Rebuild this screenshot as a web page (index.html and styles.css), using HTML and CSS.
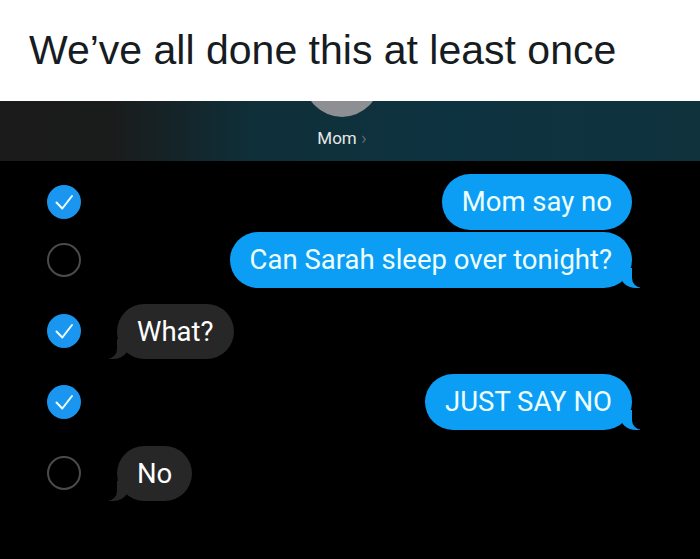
FILE: index.html
```html
<!DOCTYPE html>
<html>

<head>
    <meta charset="UTF-8">
    <title>We've all done this at least once</title>
    <link rel="stylesheet" href="styles.css">
</head>

<body>
    <div class="caption">We’ve all done this at least once</div>

    <div class="shot">
        <div class="contact">
            <div class="avatar"></div>
            <div class="name">Mom <span class="chev">›</span></div>
        </div>

        <div class="chat">
            <div class="row">
                <span class="check on">
                    <svg viewBox="0 0 34 34" width="34" height="34"><path d="M9.5 17.5 L15.3 23.5 L25 11" /></svg>
                </span>
                <div class="bubble sent">Mom say no</div>
            </div>
            <div class="row cont">
                <span class="check"></span>
                <div class="bubble sent tail">Can Sarah sleep over tonight?</div>
            </div>
            <div class="row">
                <span class="check on">
                    <svg viewBox="0 0 34 34" width="34" height="34"><path d="M9.5 17.5 L15.3 23.5 L25 11" /></svg>
                </span>
                <div class="bubble recv tail">What?</div>
            </div>
            <div class="row">
                <span class="check on">
                    <svg viewBox="0 0 34 34" width="34" height="34"><path d="M9.5 17.5 L15.3 23.5 L25 11" /></svg>
                </span>
                <div class="bubble sent tail">JUST SAY NO</div>
            </div>
            <div class="row">
                <span class="check"></span>
                <div class="bubble recv tail">No</div>
            </div>
        </div>
    </div>
</body>

</html>
```

FILE: styles.css
```css
body {
    margin: 0;
    background: #000;
    font-family: "Liberation Sans", Arial, sans-serif;
}

.caption {
    background: #fff;
    height: 101px;
    padding-left: 29px;
    line-height: 101px;
    font-size: 41px;
    color: #161c22;
    box-sizing: border-box;
}

.contact {
    height: 60px;
    overflow: hidden;
    display: flex;
    flex-direction: column;
    align-items: center;
    padding-right: 16px;
    background: linear-gradient(90deg, #1b1b1b 0, #1a1b1b 110px, #0f2f39 250px, #0e3340 450px, #0f323d 700px);
}

.avatar {
    width: 76px;
    height: 76px;
    border-radius: 50%;
    background: #8d8f93;
    margin-top: -60px;
    flex-shrink: 0;
}

.name {
    margin-top: 9px;
    font-family: Roboto, "Liberation Sans", sans-serif;
    font-size: 17px;
    color: #e6e8e8;
}

.chev {
    color: #55676e;
    font-size: 19px;
}

.chat {
    padding-top: 13px;
}

.row {
    display: flex;
    align-items: center;
    height: 56px;
    padding: 0 68px 0 47px;
    margin-top: 15px;
}

.row:first-child {
    margin-top: 0;
}

.row.cont {
    margin-top: 2px;
}

.check {
    width: 34px;
    height: 34px;
    border-radius: 50%;
    border: 2px solid #4b4b4b;
    box-sizing: border-box;
    flex-shrink: 0;
}

.check.on {
    border: none;
    background: #1b96f0;
}

.check svg {
    display: block;
}

.check path {
    fill: none;
    stroke: #eaffff;
    stroke-width: 2;
    stroke-linecap: round;
    stroke-linejoin: round;
}

.bubble {
    position: relative;
    height: 56px;
    line-height: 56px;
    padding: 0 20px;
    border-radius: 28px;
    font-family: Roboto, "Liberation Sans", sans-serif;
    font-size: 27.5px;
    white-space: nowrap;
}

.bubble.sent {
    margin-left: auto;
    background: #0b9ef4;
    color: #effeff;
}

.bubble.recv {
    margin-left: 36px;
    height: 55px;
    line-height: 55px;
    background: #272727;
    color: #fff;
}

/* the little tails */
.bubble.tail::before,
.bubble.tail::after {
    content: "";
    position: absolute;
    bottom: 0;
    height: 20px;
}

.bubble.sent.tail::before {
    right: -8px;
    width: 20px;
    background: #0b9ef4;
    border-bottom-left-radius: 16px 14px;
}

.bubble.sent.tail::after {
    right: -26px;
    width: 26px;
    background: #000;
    border-bottom-left-radius: 10px;
}

.bubble.recv.tail::before {
    left: -8px;
    width: 20px;
    background: #272727;
    border-bottom-right-radius: 16px 14px;
}

.bubble.recv.tail::after {
    left: -26px;
    width: 26px;
    background: #000;
    border-bottom-right-radius: 10px;
}
```
